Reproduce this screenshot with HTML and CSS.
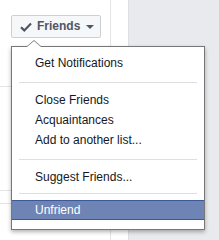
FILE: index.html
```html
<!DOCTYPE html>
<html>
<head>
<meta charset="utf-8">
<link rel="stylesheet" href="styles.css">
</head>
<body>
<div class="page">
  <div class="main">
    <div class="col">
      <div class="toolbar">
        <button class="friends-btn">
          <svg class="check" width="12" height="10" viewBox="0 0 12 10"><path d="M1 5.2 L4.3 8.4 L11 1.6" fill="none" stroke="#4e5665" stroke-width="2.2"/></svg>
          <span class="label">Friends</span>
          <span class="caret"></span>
        </button>
      </div>
      <div class="rule r1"></div>
      <div class="rule r2"></div>
      <div class="rule r3"></div>
    </div>
    <div class="gutter"></div>
  </div>
  <div class="side"></div>

  <div class="menu">
    <span class="nub"></span>
    <ul class="items">
      <li class="item">Get Notifications</li>
      <li class="sep"></li>
      <li class="item">Close Friends</li>
      <li class="item">Acquaintances</li>
      <li class="item">Add to another list...</li>
      <li class="sep"></li>
      <li class="item">Suggest Friends...</li>
      <li class="sep sep-last"></li>
      <li class="item active">Unfriend</li>
    </ul>
  </div>
</div>
</body>
</html>
```

FILE: styles.css
```css
html, body {
  margin: 0;
  padding: 0;
}
body {
  font-family: Helvetica, "Liberation Sans", Arial, sans-serif;
  font-size: 12px;
  color: #141823;
  background: #e9eaed;
}
.page {
  position: relative;
  display: flex;
  width: 219px;
  height: 240px;
  overflow: hidden;
}
.main {
  display: flex;
  width: 128px;
  height: 240px;
  background: #fff;
  border-right: 1px solid #dddfe2;
}
.col {
  width: 110px;
  border-right: 1px solid #e5e5e5;
}
.gutter {
  flex: 1;
}
.side {
  flex: 1;
  background: #e9eaed;
}
.toolbar {
  padding: 15px 0 0 11px;
  height: 71px;
  box-sizing: border-box;
}
.friends-btn {
  display: flex;
  align-items: center;
  gap: 0;
  width: 90px;
  height: 23px;
  padding: 0 0 0 8px;
  margin: 0;
  box-sizing: border-box;
  background: #f6f7f9;
  border: 1px solid #ced0d4;
  border-radius: 2px;
  font-family: Helvetica, "Liberation Sans", Arial, sans-serif;
  font-size: 12px;
  font-weight: bold;
  color: #4e5665;
}
.check {
  display: block;
  margin-right: 5px;
}
.label {
  line-height: 21px;
}
.caret {
  width: 0;
  height: 0;
  margin-left: 6px;
  border-left: 4px solid transparent;
  border-right: 4px solid transparent;
  border-top: 4px solid #4e5665;
}
.rule {
  border-top: 1px solid #e5e5e5;
}
.r1 { margin-top: 15px; }
.r2 { margin-top: 103px; }
.r3 { margin-top: 12px; }

.menu {
  position: absolute;
  left: 11px;
  top: 46px;
  width: 194px;
  box-sizing: border-box;
  background: #fff;
  border: 1px solid #777;
  box-shadow: 0 2px 4px rgba(0, 0, 0, .3);
}
.nub {
  position: absolute;
  left: 14px;
  top: -7px;
  width: 0;
  height: 0;
  border-left: 8px solid transparent;
  border-right: 8px solid transparent;
  border-bottom: 7px solid #777;
}
.nub::after {
  content: "";
  position: absolute;
  left: -7px;
  top: 1px;
  border-left: 7px solid transparent;
  border-right: 7px solid transparent;
  border-bottom: 6px solid #fff;
}
.items {
  list-style: none;
  margin: 0;
  padding: 6px 0 9px;
}
.item {
  padding: 0 10px 0 23px;
  line-height: 20px;
  color: #141823;
  white-space: nowrap;
}
.sep {
  height: 1px;
  background: #dddfe2;
  margin: 9px 7px 7px;
}
.sep-last {
  margin: 6px 7px 6px;
}
.item.active {
  background: #6d84b4;
  border-top: 1px solid #3b5998;
  border-bottom: 1px solid #3b5998;
  line-height: 18px;
  color: #fff;
}
```
